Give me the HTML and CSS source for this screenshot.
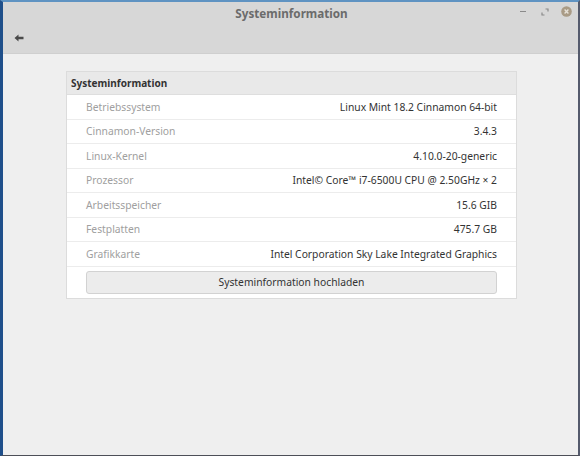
FILE: index.html
```html
<!DOCTYPE html>
<html>
<head>
<meta charset="utf-8">
<link rel="stylesheet" href="styles.css">
</head>
<body>
<div class="screen">
  <div class="headerbar">
    <div class="titlerow">
      <div class="title">Systeminformation</div>
      <div class="controls">
        <span class="ctl-min"></span>
        <svg class="ctl-max" width="8" height="8" viewBox="0 0 8 8"><path d="M4.5 1H7V3.5M3.5 7H1V4.5" fill="none" stroke="#8a8a8a" stroke-width="1.2"/></svg>
        <svg class="ctl-close" width="11" height="11" viewBox="0 0 11 11"><circle cx="5.5" cy="5.5" r="5.3" fill="#a99b86"/><path d="M3.6 3.6L7.4 7.4M7.4 3.6L3.6 7.4" stroke="#e6e1d8" stroke-width="1.4"/></svg>
      </div>
    </div>
    <div class="toolrow">
      <svg class="back" width="10" height="8" viewBox="0 0 10 8"><path d="M0.5 4L4.5 0.5V2.8H9.5V5.2H4.5V7.5Z" fill="#4a4a4a"/></svg>
    </div>
  </div>
  <div class="content">
    <div class="card">
      <div class="card-head">Systeminformation</div>
      <div class="row"><span class="label">Betriebssystem</span><span class="value">Linux Mint 18.2 Cinnamon 64-bit</span></div>
      <div class="row"><span class="label">Cinnamon-Version</span><span class="value">3.4.3</span></div>
      <div class="row"><span class="label">Linux-Kernel</span><span class="value">4.10.0-20-generic</span></div>
      <div class="row"><span class="label">Prozessor</span><span class="value">Intel© Core™ i7-6500U CPU @ 2.50GHz × 2</span></div>
      <div class="row"><span class="label">Arbeitsspeicher</span><span class="value">15.6 GIB</span></div>
      <div class="row"><span class="label">Festplatten</span><span class="value">475.7 GB</span></div>
      <div class="row"><span class="label">Grafikkarte</span><span class="value">Intel Corporation Sky Lake Integrated Graphics</span></div>
      <div class="button-row"><button class="upload">Systeminformation hochladen</button></div>
    </div>
  </div>
</div>
</body>
</html>
```
FILE: styles.css
```css
html, body {
  margin: 0;
  padding: 0;
}
body {
  width: 580px;
  height: 456px;
  overflow: hidden;
  font-family: "Noto Sans", "Open Sans", sans-serif;
}
.screen {
  box-sizing: border-box;
  width: 580px;
  height: 456px;
  display: flex;
  flex-direction: column;
  border-top: 2px solid #5f93c2;
  border-left: 3px solid #1f4f8a;
  border-right: 2px solid #545a6c;
  border-bottom: 1px solid #4d4f57;
  background: #efefef;
}
.headerbar {
  background: #d7d7d7;
  height: 51px;
  border-bottom: 1px solid #cfcfcf;
  display: flex;
  flex-direction: column;
}
.titlerow {
  height: 22px;
  position: relative;
  display: flex;
  align-items: center;
  justify-content: center;
}
.title {
  font-weight: bold;
  font-size: 11.7px;
  color: #6b6b6b;
  margin-left: 2px;
}
.controls {
  position: absolute;
  right: 6px;
  top: 4px;
  display: flex;
  align-items: center;
}
.ctl-min {
  display: block;
  width: 6px;
  height: 1px;
  background: #8a8a8a;
  margin-right: 15px;
}
.ctl-max {
  display: block;
  margin-right: 12px;
}
.ctl-close {
  display: block;
}
.toolrow {
  flex: 1;
  display: flex;
  align-items: center;
  padding-left: 11px;
  padding-bottom: 1px;
}
.back {
  display: block;
}
.content {
  flex: 1;
  padding: 17px 61px 0 63px;
}
.card {
  background: #ffffff;
  border: 1px solid #dcdcdc;
  padding-bottom: 4px;
}
.card-head {
  background: #e9e9e9;
  border-bottom: 1px solid #dedede;
  height: 22px;
  line-height: 22px;
  padding-left: 4px;
  font-size: 10px;
  font-weight: bold;
  color: #333333;
}
.row {
  height: 23.5px;
  border-bottom: 1px solid #ececec;
  display: flex;
  align-items: center;
  justify-content: space-between;
  padding: 0 19px 0 19px;
  font-size: 10.3px;
}
.label {
  color: #a0a0a0;
}
.value {
  color: #333333;
}
.button-row {
  padding: 4px 19px 0 19px;
}
.upload {
  display: block;
  width: 100%;
  height: 23px;
  background: #ececec;
  border: 1px solid #d2d2d2;
  border-radius: 3px;
  font-family: "Noto Sans", "Open Sans", sans-serif;
  font-size: 10.3px;
  color: #333333;
  padding: 0;
}
```
